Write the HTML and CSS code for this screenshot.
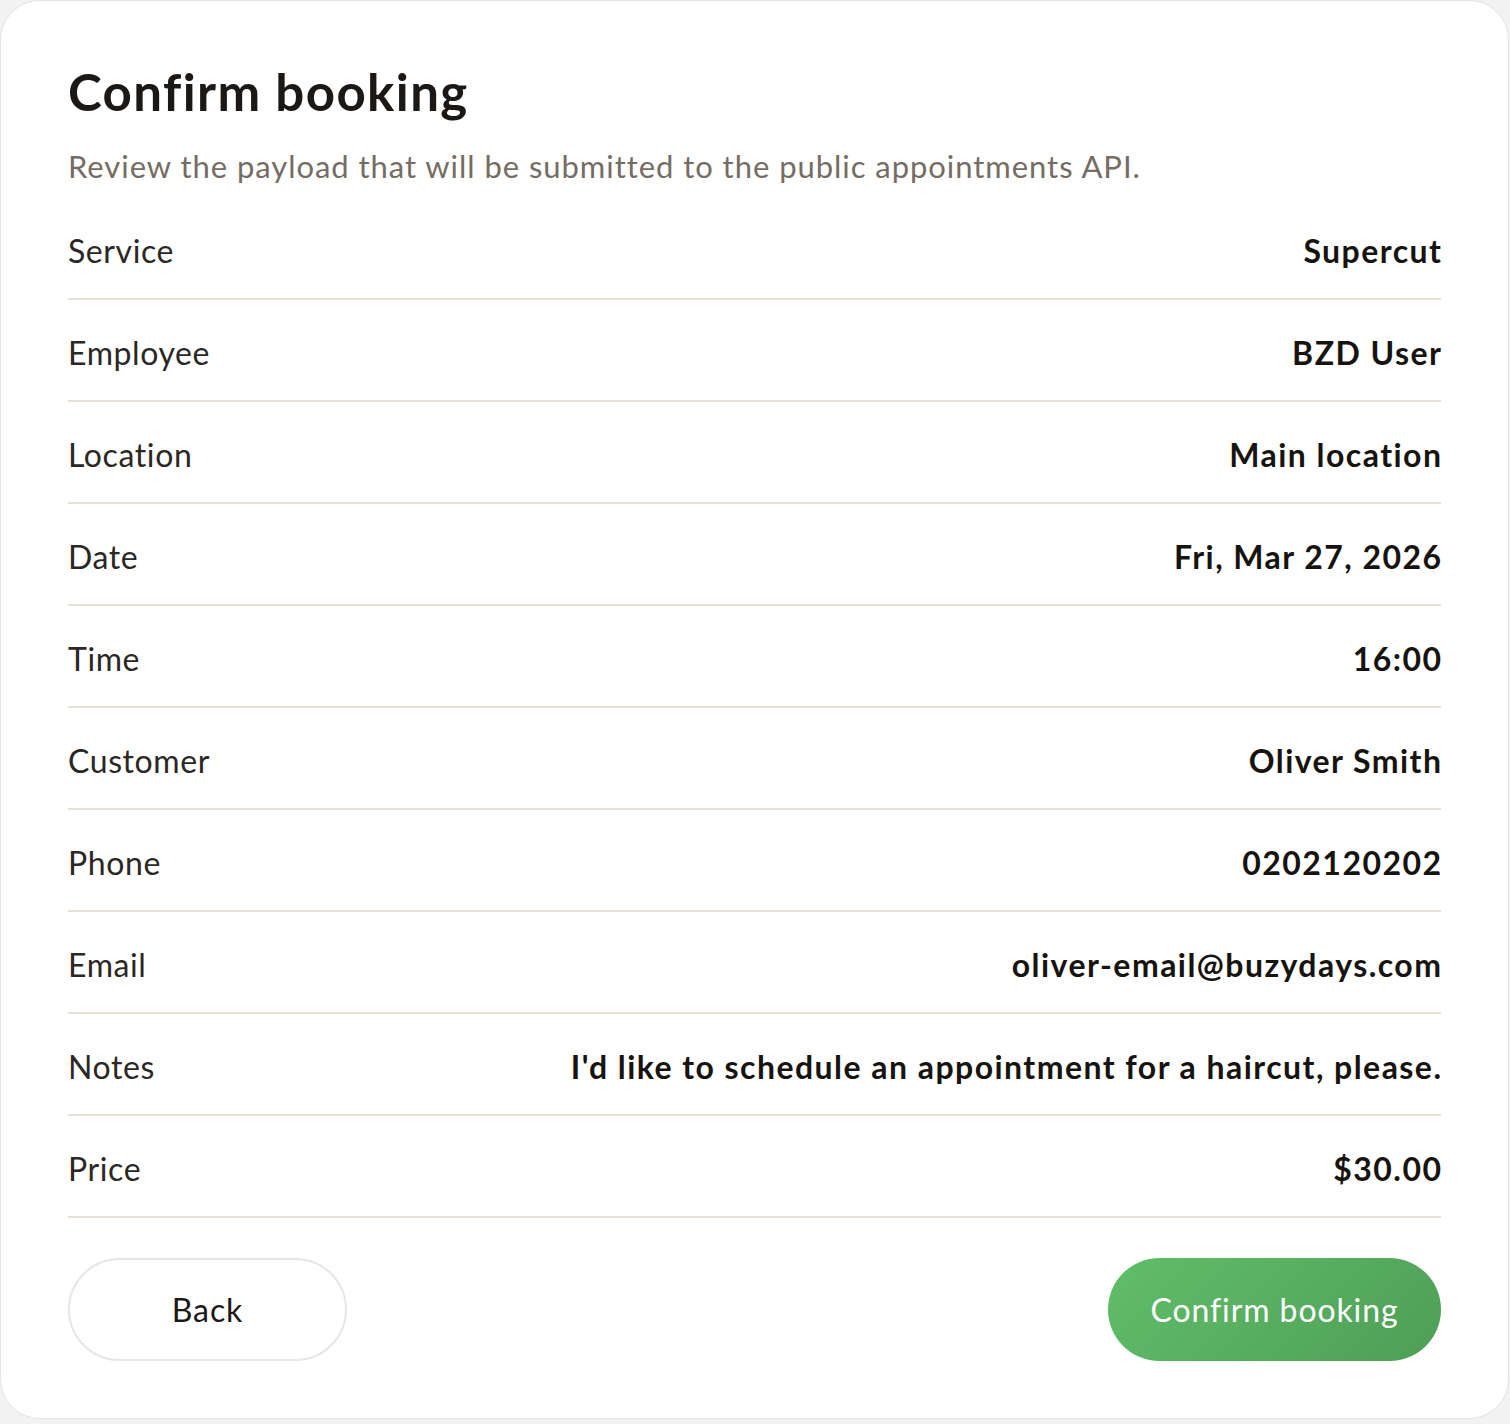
FILE: index.html
```html
<!DOCTYPE html>
<html lang="en">
<head>
<meta charset="utf-8">
<title>Confirm booking</title>
<link rel="stylesheet" href="styles.css">
</head>
<body>
<div class="card">
  <h1 class="title">Confirm booking</h1>
  <p class="subtitle">Review the payload that will be submitted to the public appointments API.</p>
  <div class="rows">
    <div class="row"><span class="label">Service</span><span class="value">Supercut</span></div>
    <div class="row"><span class="label">Employee</span><span class="value">BZD User</span></div>
    <div class="row"><span class="label">Location</span><span class="value">Main location</span></div>
    <div class="row"><span class="label">Date</span><span class="value">Fri, Mar 27, 2026</span></div>
    <div class="row"><span class="label">Time</span><span class="value">16:00</span></div>
    <div class="row"><span class="label">Customer</span><span class="value">Oliver Smith</span></div>
    <div class="row"><span class="label">Phone</span><span class="value">0202120202</span></div>
    <div class="row"><span class="label">Email</span><span class="value">oliver-email@buzydays.com</span></div>
    <div class="row"><span class="label">Notes</span><span class="value">I'd like to schedule an appointment for a haircut, please.</span></div>
    <div class="row"><span class="label">Price</span><span class="value">$30.00</span></div>
  </div>
  <div class="actions">
    <button class="btn btn-back" type="button">Back</button>
    <button class="btn btn-confirm" type="button">Confirm booking</button>
  </div>
</div>
</body>
</html>
```
FILE: styles.css
```css
* { box-sizing: border-box; }
html, body { margin: 0; padding: 0; }
body {
  background: #f3f2f2;
  font-family: Lato, "Noto Sans", sans-serif;
  color: #1c1816;
}
.card {
  width: 1509px;
  height: 1419px;
  background: #ffffff;
  border: 1px solid #e4e3e8;
  border-radius: 40px;
  padding: 61px 67px 0 67px;
}
.title {
  margin: 0;
  font-size: 51px;
  line-height: 60px;
  font-weight: 700;
  letter-spacing: 1.4px;
  color: #1c1816;
}
.subtitle {
  margin: 24px 0 0 0;
  font-size: 31px;
  line-height: 40px;
  letter-spacing: 0.95px;
  color: #756c64;
}
.rows {
  margin-top: 12px;
}
.row {
  display: flex;
  justify-content: space-between;
  align-items: center;
  height: 102px;
  padding-top: 4px;
  border-bottom: 2px solid #e8dfd5;
  font-size: 32px;
}
.label {
  color: #2b2724;
  letter-spacing: 0.6px;
}
.value {
  font-weight: 700;
  letter-spacing: 1.45px;
  margin-right: -1.45px;
  color: #17130f;
}
.actions {
  display: flex;
  justify-content: space-between;
  margin-top: 40px;
}
.btn {
  height: 103px;
  border-radius: 52px;
  font-family: Lato, "Noto Sans", sans-serif;
  font-size: 32px;
  letter-spacing: 0.9px;
  cursor: pointer;
}
.btn-back {
  width: 279px;
  background: #ffffff;
  border: 2px solid #e6e5ea;
  color: #1c1816;
}
.btn-confirm {
  width: 333px;
  border: none;
  color: #ffffff;
  background: linear-gradient(135deg, #60be69 0%, #56ab5e 60%, #4e9d57 100%);
}
```
